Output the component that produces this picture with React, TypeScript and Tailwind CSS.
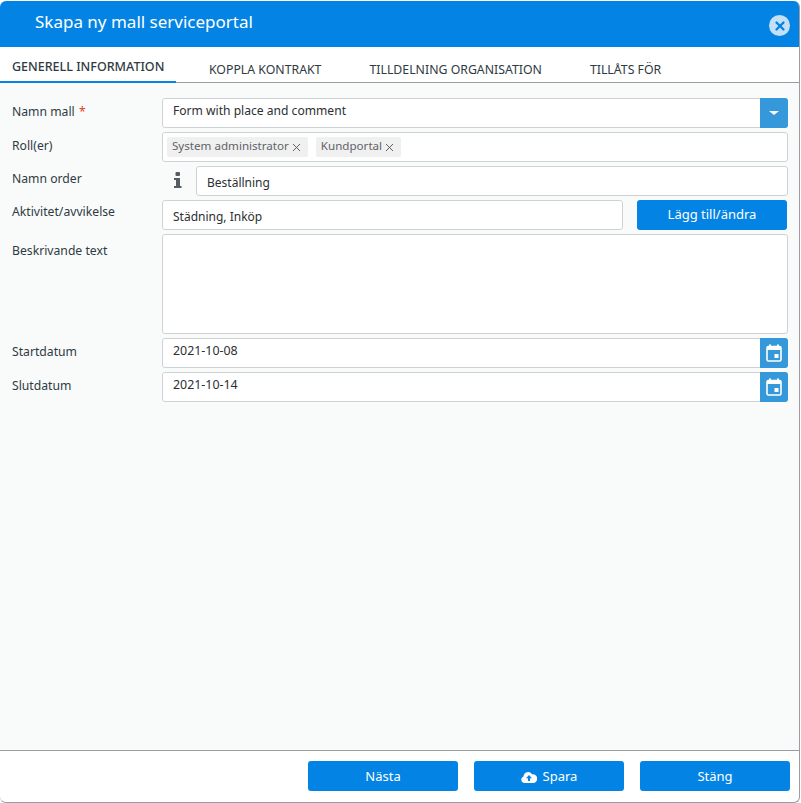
import { X } from 'lucide-react';

const labelClass = "w-[162px] shrink-0 pl-3 text-[12.2px] leading-[16px] text-[#2f3a42]";
const fieldClass = "h-[30px] bg-white border border-[#cfd2d4] rounded-[3px] text-[12px] text-[#2b2f33] flex items-center pl-[10px]";

function CalendarIcon() {
  return (
    <svg width="16" height="18" viewBox="0 0 16 18" fill="none">
      <path d="M4 0.5v3M12 0.5v3" stroke="#fff" strokeWidth="2" />
      <rect x="1" y="2.5" width="14" height="14.5" rx="1.500" stroke="#fff" strokeWidth="1.6" />
      <rect x="1" y="2.5" width="14" height="3.5" fill="#fff" />
      <rect x="8.5" y="10" width="4" height="4" fill="#fff" />
    </svg>
  );
}

function DateRow({ label, value }: { label: string; value: string }) {
  return (
    <div className="flex pr-[11px]">
      <div className={`${labelClass} pt-[6px]`}>{label}</div>
      <div className={`${fieldClass} flex-1 relative`}>
        <span className="-mt-[3px] text-[12.4px]">{value}</span>
        <div className="absolute -right-px -top-px h-[30px] w-[28px] bg-[#3498db] rounded-r-[3px] flex items-center justify-center">
          <CalendarIcon />
        </div>
      </div>
    </div>
  );
}

function Tag({ text }: { text: string }) {
  return (
    <span className="h-[20px] bg-[#f0f0f0] rounded-[2px] pl-[5px] pr-[5px] flex items-center gap-[1px] text-[11.6px] text-[#5f6468]">
      <span className="-mt-[2px]">{text}</span>
      <X size={13} strokeWidth={1.7} className="text-[#555]" />
    </span>
  );
}

function FooterButton({ children }: { children: React.ReactNode }) {
  return (
    <button className="w-[150px] h-[30px] bg-[#0384e4] rounded-[3px] text-white text-[13px] pt-px flex items-center justify-center gap-[6px]">
      {children}
    </button>
  );
}

export default function App() {
  return (
    <div className="w-[801px] h-[803px] bg-white pt-px pr-px font-['Noto_Sans','Open_Sans',sans-serif] overflow-hidden">
      <div className="h-full flex flex-col rounded-[6px] overflow-hidden border-r border-b border-[#9a9ea3] bg-white">
        {/* Header */}
        <header className="h-[46px] shrink-0 bg-[#0384e4] flex items-center justify-between pl-[35px] pr-[9px]">
          <h1 className="text-[17px] text-white -mt-[4px]">Skapa ny mall serviceportal</h1>
          <div className="w-[21px] h-[21px] mt-[3px] rounded-full bg-[#c4e0f7] flex items-center justify-center">
            <X size={14} strokeWidth={4} className="text-[#0384e4]" />
          </div>
        </header>

        {/* Tabs */}
        <nav className="h-[36px] shrink-0 flex border-b border-[#9a9ea3] text-[12.3px] text-[#2f3a42]">
          <div className="w-[176px] -mb-px border-b-2 border-[#0384e4] pl-3 pt-[12px] font-medium text-[12.5px] leading-[16px] h-[36px]">GENERELL INFORMATION</div>
          <div className="ml-[33px] pt-[15px] leading-[16px]">KOPPLA KONTRAKT</div>
          <div className="ml-[48px] pt-[15px] leading-[16px]">TILLDELNING ORGANISATION</div>
          <div className="ml-[48px] pt-[15px] leading-[16px]">TILLÅTS FÖR</div>
        </nav>

        {/* Form */}
        <main className="flex-1 bg-[#f9fbfb] pt-[15px] flex flex-col gap-[4px]">
          <div className="flex pr-[11px]">
            <div className={`${labelClass} pt-[6px]`}>Namn mall <span className="ml-px text-[#e0401e]">*</span></div>
            <div className={`${fieldClass} flex-1 relative`}>
              <span className="-mt-[4px] text-[12.1px]">Form with place and comment</span>
              <div className="absolute -right-px -top-px h-[30px] w-[28px] bg-[#3498db] rounded-r-[3px] flex items-center justify-center">
                <div className="w-0 h-0 border-x-[5px] border-x-transparent border-t-[4px] border-t-white" />
              </div>
            </div>
          </div>
          <div className="flex pr-[11px]">
            <div className={`${labelClass} pt-[6px]`}>Roll(er)</div>
            <div className={`${fieldClass} flex-1 gap-[8px] !pl-[4px]`}>
              <Tag text="System administrator" />
              <Tag text="Kundportal" />
            </div>
          </div>
          <div className="flex pr-[11px]">
            <div className={`${labelClass} pt-[5px]`}>Namn order</div>
            <div className="w-[34px] pl-[10px] pt-[5px] shrink-0">
              <svg width="12" height="18" viewBox="0 0 12 18" fill="#555c62">
                <rect x="3.5" y="1" width="4.5" height="4" rx="1" />
                <path d="M2 7h6v8h1.5v2h-7.500v-2h2v-6h-2z" />
              </svg>
            </div>
            <div className={`${fieldClass} flex-1`}>
              <span className="mt-[3px]">Beställning</span>
            </div>
          </div>
          <div className="flex pr-[12px]">
            <div className={`${labelClass} pt-[4px]`}>Aktivitet/avvikelse</div>
            <div className={`${fieldClass} w-[461px]`}>
              <span className="mt-[3px]">Städning, Inköp</span>
            </div>
            <button className="ml-[14px] flex-1 h-[30px] bg-[#0384e4] rounded-[3px] text-white text-[13px]">Lägg till/ändra</button>
          </div>
          <div className="flex pr-[11px]">
            <div className={`${labelClass} pt-[9px]`}>Beskrivande text</div>
            <div className="flex-1 h-[100px] bg-white border border-[#cfd2d4] rounded-[3px]" />
          </div>
          <DateRow label="Startdatum" value="2021-10-08" />
          <DateRow label="Slutdatum" value="2021-10-14" />
        </main>

        {/* Footer */}
        <footer className="h-[52px] shrink-0 border-t border-[#9a9ea3] flex justify-end gap-4 pt-[10px] pr-[9px]">
          <FooterButton>Nästa</FooterButton>
          <FooterButton>
            <svg width="16" height="12" viewBox="0 0 16 12" fill="#fff">
              <path d="M3.500 12a3.400 3.400 0 0 1-1-6.600A4.600 4.600 0 0 1 11 3.300 3.600 3.600 0 0 1 12.600 12zM8 4 5 7.200h2V10h2V7.200h2z" fillRule="evenodd" />
            </svg>
            Spara
          </FooterButton>
          <FooterButton>Stäng</FooterButton>
        </footer>
      </div>
    </div>
  );
}
